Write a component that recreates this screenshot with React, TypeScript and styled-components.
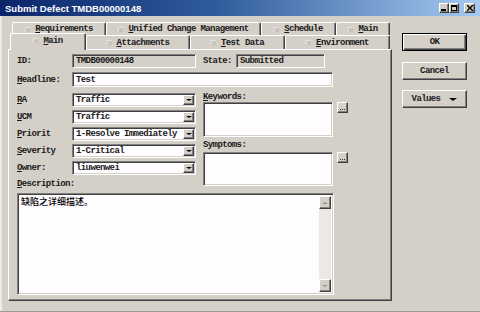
import styled, { createGlobalStyle, css } from "styled-components"

const FACE = "#d4d0c8"
const FIELD = "#fffcff"
const MONO = `"Liberation Mono", "DejaVu Sans Mono", monospace`

const GlobalStyle = createGlobalStyle`
  html, body {
    margin: 0;
    padding: 0;
    background: ${FACE};
  }
  body {
    width: 480px;
    height: 312px;
    overflow: hidden;
  }
`

const raised = css`
  border: 1px solid;
  border-color: #fff #404040 #404040 #fff;
  box-shadow: inset -1px -1px 0 #808080;
`

const sunken = css`
  border: 1px solid;
  border-color: #808080 #fff #fff #808080;
  box-shadow: inset 1px 1px 0 #404040, inset -1px -1px 0 ${FACE};
`

const Window = styled.div`
  width: 480px;
  height: 312px;
  box-sizing: border-box;
  background: ${FACE};
  display: flex;
  flex-direction: column;
  border-bottom: 1px solid #9c9a96;
  font-family: ${MONO};
  font-size: 9px;
  font-weight: bold;
  letter-spacing: -0.6px;
  color: #1a1a1a;
`

const TitleBar = styled.div`
  height: 16px;
  flex: none;
  display: flex;
  align-items: center;
  padding: 0 5px 0 5px;
  background: linear-gradient(90deg, #0a246a 0%, #2f5c9c 45%, #a6caf0 100%);
`

const Title = styled.span`
  flex: 1;
  color: #fff;
  font-family: "Liberation Sans", Arial, sans-serif;
  font-weight: bold;
  font-size: 9.5px;
  letter-spacing: 0;
`

const CaptionButton = styled.div<{ $w: number; $gap?: number }>`
  width: ${p => p.$w}px;
  height: 10px;
  box-sizing: border-box;
  margin-left: ${p => p.$gap ?? 0}px;
  background: ${FACE};
  ${raised};
  display: flex;
  align-items: center;
  justify-content: center;
`

const Body = styled.div`
  flex: 1;
  display: flex;
  gap: 10px;
  padding: 6px 0 0 6px;
  border-left: 2px solid #ecebe7;
`

const TabArea = styled.div`
  width: 384px;
  display: flex;
  flex-direction: column;
`

const TabRow = styled.div<{ $indent: number; $h: number }>`
  height: ${p => p.$h}px;
  display: flex;
  align-items: flex-end;
  padding-left: ${p => p.$indent}px;
`

const Tab = styled.div<{ $w: number; $active?: boolean }>`
  width: ${p => p.$w}px;
  height: 100%;
  box-sizing: border-box;
  display: flex;
  align-items: center;
  justify-content: center;
  gap: 5px;
  background: ${FACE};
  border: 1px solid;
  border-color: #fff #404040 transparent #fff;
  border-bottom: none;
  border-radius: 2px 2px 0 0;
  box-shadow: inset -1px 0 0 #808080;
  white-space: nowrap;
  ${p =>
    p.$active &&
    css`
      position: relative;
      z-index: 1;
      height: calc(100% + 3px);
      margin-bottom: -1px;
      padding-bottom: 3px;
    `}
`

const TabIcon = styled.span`
  width: 5px;
  height: 5px;
  flex: none;
  background: #c6c3be;
  box-shadow: inset 1px 1px 0 #e4e2de;
`

const Panel = styled.div`
  height: 252px;
  box-sizing: border-box;
  ${raised};
  padding: 4px 0 0 8px;
  display: flex;
  flex-direction: column;
`

const Row = styled.div<{ $mb: number }>`
  display: flex;
  align-items: center;
  margin-bottom: ${p => p.$mb}px;
`

const Label = styled.span<{ $w?: number; $ml?: number }>`
  width: ${p => p.$w ?? 55}px;
  margin-left: ${p => p.$ml ?? 0}px;
  flex: none;
  white-space: nowrap;
`

const Field = styled.div<{ $w: number; $h: number; $disabled?: boolean }>`
  width: ${p => p.$w}px;
  height: ${p => p.$h}px;
  box-sizing: border-box;
  flex: none;
  ${sunken};
  background: ${p => (p.$disabled ? FACE : FIELD)};
  display: flex;
  align-items: center;
  padding: 1px 1px 1px 3px;
  overflow: hidden;
  white-space: nowrap;
`

const FieldText = styled.span`
  flex: 1;
`

const DropButton = styled.div`
  width: 11px;
  height: 100%;
  box-sizing: border-box;
  flex: none;
  background: ${FACE};
  ${raised};
  display: flex;
  align-items: center;
  justify-content: center;
`

const Arrow = styled.span<{ $size: number; $color?: string; $up?: boolean }>`
  width: 0;
  height: 0;
  border-left: ${p => p.$size}px solid transparent;
  border-right: ${p => p.$size}px solid transparent;
  ${p =>
    p.$up
      ? css`border-bottom: ${p.$size - 1}px solid ${p.$color ?? "#000"};`
      : css`border-top: ${p.$size - 1}px solid ${p.$color ?? "#000"};`}
`

const Split = styled.div`
  display: flex;
  height: 96px;
  margin-bottom: 4px;
`

const SelectGrid = styled.div`
  width: 179px;
  display: grid;
  grid-template-columns: 55px 124px;
  grid-auto-rows: 14px;
  row-gap: 3px;
  align-items: center;
`

const LeftCol = styled.div`
  display: flex;
  flex-direction: column;
`

const DescLabel = styled.span`
  margin-top: 4px;
  line-height: 10px;
`

const RightCol = styled.div`
  margin-left: 7px;
  display: flex;
  flex-direction: column;
`

const BoxLabel = styled.span<{ $h: number; $pt: number }>`
  height: ${p => p.$h}px;
  padding-top: ${p => p.$pt}px;
  box-sizing: border-box;
  line-height: 9px;
`

const BoxRow = styled.div`
  display: flex;
  align-items: flex-start;
  gap: 4px;
`

const MemoBox = styled.div<{ $w: number; $h: number }>`
  width: ${p => p.$w}px;
  height: ${p => p.$h}px;
  box-sizing: border-box;
  ${sunken};
  background: ${FIELD};
  display: flex;
  padding: 2px;
`

const MemoText = styled.div`
  flex: 1;
  padding: 0 1px;
  font-family: "Noto Sans CJK SC", "Liberation Sans", sans-serif;
  font-size: 9px;
  font-weight: 500;
  letter-spacing: 0;
  line-height: 11px;
  color: #000;
`

const MiniButton = styled.div`
  width: 11px;
  height: 11px;
  box-sizing: border-box;
  background: ${FACE};
  ${raised};
  display: flex;
  align-items: flex-end;
  justify-content: center;
  padding-bottom: 2px;
  gap: 1px;
`

const Dot = styled.span`
  width: 1px;
  height: 1px;
  background: #333;
`

const ScrollBar = styled.div`
  width: 12px;
  display: flex;
  flex-direction: column;
  justify-content: space-between;
  background: #ebe9e6;
`

const ScrollButton = styled.div`
  height: 13px;
  box-sizing: border-box;
  background: ${FACE};
  ${raised};
  display: flex;
  align-items: center;
  justify-content: center;
`

const ButtonCol = styled.div`
  width: 65px;
  display: flex;
  flex-direction: column;
  padding-top: 11px;
`

const PushButton = styled.div<{ $mt: number; $default?: boolean }>`
  height: 18px;
  box-sizing: border-box;
  margin-top: ${p => p.$mt}px;
  background: ${FACE};
  display: flex;
  align-items: center;
  justify-content: center;
  gap: 9px;
  ${p =>
    p.$default
      ? css`
          border: 1px solid #000;
          box-shadow: inset 1px 1px 0 #fff, inset -1px -1px 0 #404040, inset -2px -2px 0 #808080;
        `
      : raised}
`

const U = styled.span`
  text-decoration: underline;
  text-underline-offset: 1px;
`

const acc = (text: string) => (
  <>
    <U>{text[0]}</U>
    {text.slice(1)}
  </>
)

const backTabs = [
  { label: "Requirements", w: 94 },
  { label: "Unified Change Management", w: 155 },
  { label: "Schedule", w: 75 },
  { label: "Main", w: 54 },
]

const frontTabs = [
  { label: "Main", w: 76, active: true },
  { label: "Attachments", w: 104 },
  { label: "Test Data", w: 95 },
  { label: "Environment", w: 105 },
]

const selects = [
  { label: "RA", value: "Traffic" },
  { label: "UCM", value: "Traffic" },
  { label: "Priorit", value: "1-Resolve Immediately" },
  { label: "Severity", value: "1-Critical" },
  { label: "Owner:", value: "liuwenwei" },
]

function CaptionIcons() {
  return (
    <>
      <CaptionButton $w={10}>
        <svg width="6" height="6" viewBox="0 0 6 6">
          <rect x="0" y="4" width="5" height="2" fill="#000" />
        </svg>
      </CaptionButton>
      <CaptionButton $w={10}>
        <svg width="6" height="6" viewBox="0 0 6 6">
          <rect x="0.5" y="0.5" width="5" height="5" fill="none" stroke="#000" />
          <rect x="0" y="0" width="6" height="2" fill="#000" />
        </svg>
      </CaptionButton>
      <CaptionButton $w={11} $gap={5}>
        <svg width="6" height="6" viewBox="0 0 6 6">
          <path d="M0 0 L6 6 M6 0 L0 6" stroke="#000" strokeWidth="1.4" />
        </svg>
      </CaptionButton>
    </>
  )
}

function Ellipsis() {
  return (
    <MiniButton>
      <Dot />
      <Dot />
      <Dot />
    </MiniButton>
  )
}

export default function App() {
  return (
    <>
      <GlobalStyle />
      <Window>
        <TitleBar>
          <Title>Submit Defect TMDB00000148</Title>
          <CaptionIcons />
        </TitleBar>
        <Body>
          <TabArea>
            <TabRow $indent={4} $h={13}>
              {backTabs.map(t => (
                <Tab key={t.label} $w={t.w}>
                  <TabIcon />
                  <span>{acc(t.label)}</span>
                </Tab>
              ))}
            </TabRow>
            <TabRow $indent={2} $h={14}>
              {frontTabs.map(t => (
                <Tab key={t.label} $w={t.w} $active={t.active}>
                  <TabIcon />
                  <span>{acc(t.label)}</span>
                </Tab>
              ))}
            </TabRow>
            <Panel>
              <Row $mb={4}>
                <Label>ID:</Label>
                <Field $w={124} $h={14} $disabled>
                  <FieldText>TMDB00000148</FieldText>
                </Field>
                <Label $w={33} $ml={7}>State:</Label>
                <Field $w={89} $h={14} $disabled>
                  <FieldText>Submitted</FieldText>
                </Field>
              </Row>
              <Row $mb={6}>
                <Label>{acc("Headline:")}</Label>
                <Field $w={261} $h={15}>
                  <FieldText>Test</FieldText>
                </Field>
              </Row>
              <Split>
                <LeftCol>
                  <SelectGrid>
                    {selects.map(s => (
                      <>
                        <Label key={s.label + "-l"}>{acc(s.label)}</Label>
                        <Field key={s.label + "-f"} $w={124} $h={14}>
                          <FieldText>{s.value}</FieldText>
                          <DropButton>
                            <Arrow $size={3} />
                          </DropButton>
                        </Field>
                      </>
                    ))}
                  </SelectGrid>
                  <DescLabel>{acc("Description:")}</DescLabel>
                </LeftCol>
                <RightCol>
                  <BoxLabel $h={9} $pt={0}>{acc("Keywords:")}</BoxLabel>
                  <BoxRow>
                    <MemoBox $w={130} $h={35} />
                    <Ellipsis />
                  </BoxRow>
                  <BoxLabel $h={15} $pt={4}>Symptoms:</BoxLabel>
                  <BoxRow>
                    <MemoBox $w={130} $h={34} />
                    <Ellipsis />
                  </BoxRow>
                </RightCol>
              </Split>
              <MemoBox $w={317} $h={102}>
                <MemoText>缺陷之详细描述。</MemoText>
                <ScrollBar>
                  <ScrollButton>
                    <Arrow $size={3} $up $color="#9a9894" />
                  </ScrollButton>
                  <ScrollButton>
                    <Arrow $size={3} $color="#9a9894" />
                  </ScrollButton>
                </ScrollBar>
              </MemoBox>
            </Panel>
          </TabArea>
          <ButtonCol>
            <PushButton $mt={0} $default>OK</PushButton>
            <PushButton $mt={11}>Cancel</PushButton>
            <PushButton $mt={10}>
              <span>Values</span>
              <Arrow $size={4} />
            </PushButton>
          </ButtonCol>
        </Body>
      </Window>
    </>
  )
}
